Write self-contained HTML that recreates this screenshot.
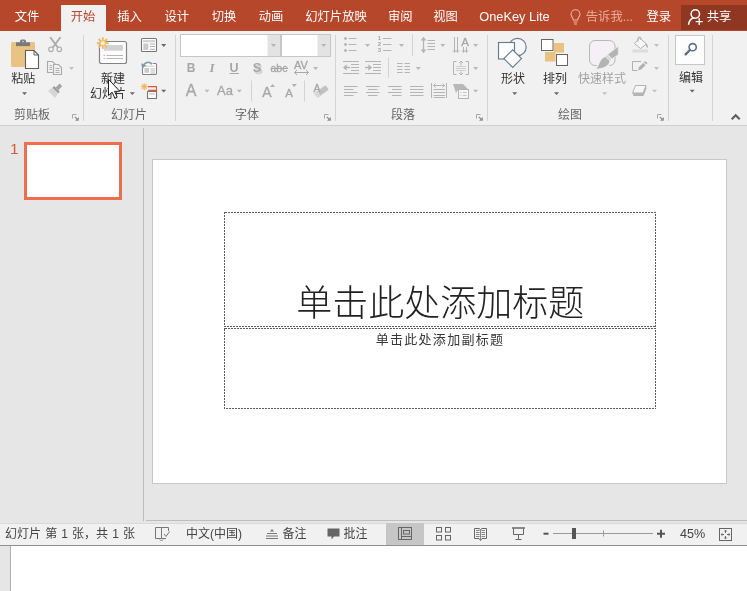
<!DOCTYPE html>
<html lang="zh-CN">
<head>
<meta charset="utf-8">
<title>PowerPoint</title>
<style>
*{box-sizing:border-box;margin:0;padding:0}
html,body{width:747px;height:591px;overflow:hidden;background:#fff}
body{font-family:"Liberation Sans","Noto Sans CJK SC",sans-serif;font-size:12px;color:#444;position:relative}
.abs{position:absolute}
#tabbar{left:0;top:0;width:747px;height:31px;background:#b7472a}
.tab{position:absolute;top:0;height:31px;line-height:35px;color:#fff;font-size:12.3px;transform:translateX(-50%);white-space:nowrap}
#tab-active{left:61px;top:5px;width:45px;height:26px;background:#f1f1f1}
#share{left:681px;top:5px;width:66px;height:25px;background:#903722}
#ribbon{left:0;top:31px;width:747px;height:95px;background:#f1f1f1;border-bottom:1px solid #d0d0d0}
.sep{position:absolute;top:35px;width:1px;height:86px;background:#d4d4d4}
.glabel{position:absolute;top:107px;font-size:12px;line-height:16px;color:#666;white-space:nowrap}
.ft{position:absolute;text-align:center;color:#a6a6a6;line-height:16px;font-family:"Liberation Sans",sans-serif;white-space:nowrap}
.fs{-webkit-text-stroke:0.3px #a6a6a6}
.btxt{position:absolute;font-size:12px;line-height:16px;color:#333;white-space:nowrap}
#main{left:0;top:126px;width:747px;height:397px;background:#e6e6e6}
#vdiv{left:143px;top:128px;width:1px;height:393px;background:#bcbcbc}
#thumb{left:24px;top:142px;width:98px;height:58px;background:#fff;border:3px solid #ee6d4d}
#thumbnum{left:10px;top:140px;font-size:15.5px;color:#d9583a;line-height:18px}
#slide{left:152px;top:159px;width:575px;height:325px;background:#fff;border:1px solid #c8c8c8}
#status{left:0;top:523px;width:747px;height:23px;background:#f1f1f1;border-top:1px solid #dadada;border-bottom:1px solid #909090}
#hline{left:146px;top:520px;width:601px;height:1px;background:#bebebe}
.st{position:absolute;top:526px;font-size:12px;line-height:16px;color:#444;white-space:nowrap}
#below{left:0;top:546px;width:747px;height:45px;background:#fff}
#belowleft{left:0;top:546px;width:11px;height:45px;background:#e6e6e6;border-right:1px solid #b0b0b0}
</style>
</head>
<body>
<div id="root" style="position:absolute;left:0;top:0;width:747px;height:591px;will-change:transform">
<div id="tabbar" class="abs"></div>
<div id="tab-active" class="abs"></div>
<div id="share" class="abs"></div>
<div class="tab" style="left:27px">文件</div>
<div class="tab" style="left:83px;color:#b7472a">开始</div>
<div class="tab" style="left:129.5px">插入</div>
<div class="tab" style="left:176.8px">设计</div>
<div class="tab" style="left:224px">切换</div>
<div class="tab" style="left:271px">动画</div>
<div class="tab" style="left:336px">幻灯片放映</div>
<div class="tab" style="left:400.2px">审阅</div>
<div class="tab" style="left:445.6px">视图</div>
<div class="tab" style="left:514.5px;font-size:12.8px;line-height:33px">OneKey Lite</div>
<div class="tab" style="left:609.4px;color:#e9ad9a">告诉我...</div>
<div class="tab" style="left:658.8px">登录</div>
<div class="tab" style="left:719px;line-height:35px">共享</div>

<svg class="abs" style="left:560px;top:0" width="187" height="31" viewBox="560 0 187 31">
<g fill="none" stroke="#e9b5a5" stroke-width="1.1">
<path d="M573.3,20 C573.3,17.500 571,16.800 571,14.300 a4.500,4.500 0 0 1 9,0 C580,16.800 577.700,17.500 577.700,20 Z"/>
<path d="M573.500,22 H577.500 M574,24 H577"/>
</g>
<g fill="none" stroke="#fff" stroke-width="1.500">
<circle cx="695.300" cy="14" r="4.200"/>
<path d="M688.600,24.800 C688.800,21 691,18.800 693.600,18"/>
<path d="M695.700,21.600 H702.700 M699.200,18.100 V25.100" stroke-width="1.300"/>
</g>
</svg>
<div id="ribbon" class="abs"></div>
<div class="sep" style="left:83px"></div>
<div class="sep" style="left:175px"></div>
<div class="sep" style="left:335px"></div>
<div class="sep" style="left:487px"></div>
<div class="sep" style="left:668px"></div>
<div class="sep" style="left:712px"></div>
<svg class="abs" id="ribsvg" style="left:0;top:0" width="747" height="130" viewBox="0 0 747 130">
<defs>
<path id="dd" d="M-2.5,-1.2 H2.5 L0,1.6 Z"/>
<g id="launch"><path d="M0.5,4.5 V0.5 H4.5" fill="none" stroke="#a8a8a8" stroke-width="1"/><path d="M2.8,2.8 L5.5,5.5" fill="none" stroke="#8c8c8c" stroke-width="1.1"/><path d="M6.8,3 V6.8 H3 Z" fill="#8c8c8c"/></g>
</defs>
<!-- ===== Clipboard group ===== -->
<rect x="11" y="42" width="24" height="25" rx="1.5" fill="#eac282"/>
<rect x="16" y="42.300" width="14" height="3.800" fill="#7a7a7a"/>
<path d="M20,42.800 V41.200 a1.800,1.800 0 0 1 1.800,-1.800 h2.400 a1.800,1.800 0 0 1 1.800,1.800 V42.800 Z" fill="#7a7a7a"/>
<rect x="22.200" y="40.800" width="1.600" height="1.400" fill="#c9c9c9"/>
<path d="M25.500,50.500 H34 L38.500,55 V68.500 H25.500 Z" fill="#fff" stroke="#5e5e5e" stroke-width="1.100" stroke-linejoin="miter"/>
<path d="M34,50.500 V55 H38.500" fill="none" stroke="#5e5e5e" stroke-width="1"/>
<use href="#dd" x="24.5" y="93.5" fill="#666"/>
<!-- scissors -->
<g fill="none" stroke="#ababab" stroke-linecap="round">
<path d="M50.600,37.800 L57.500,47 M60,37.800 L53.100,47" stroke-width="1.900"/>
<circle cx="51" cy="49.300" r="2.300" stroke-width="1.100"/><circle cx="59.300" cy="49.300" r="2.300" stroke-width="1.100"/>
</g>
<!-- copy -->
<g fill="#f1f1f1" stroke="#aaaaaa" stroke-width="1.100">
<path d="M47.500,61.500 H52.500 L55.500,64.500 V72.500 H47.500 Z"/>
<path d="M53.500,64.500 H58.500 L61.500,67.500 V74.500 H53.500 Z"/>
<path d="M49.500,65.500 H52 M49.500,67.500 H52 M49.500,69.500 H52 M55.500,68.500 H59.500 M55.500,70.500 H59.500 M55.500,72.500 H59.500" fill="none" stroke="#b0b0b0" stroke-width="1.200"/>
</g>
<use href="#dd" x="71.5" y="68.3" fill="#c0c0c0"/>
<!-- format painter -->
<path d="M52.470,87.670 L58.130,93.330 L54.940,97.940 L47.860,90.860 Z" fill="#d6d6d6"/>
<path d="M54.170,85.970 L59.830,91.630 L58.130,93.330 L52.470,87.670 Z" fill="#9c9c9c"/>
<path d="M59.560,83.560 L62.240,86.240 L58.340,90.140 L55.660,87.460 Z" fill="#a4a4a4"/>
<use href="#launch" x="72" y="114" />
<!-- ===== Slides group ===== -->
<rect x="99.500" y="41.500" width="27" height="22" rx="2" fill="#fdfdfd" stroke="#848484" stroke-width="1.200"/>
<rect x="104" y="45" width="19" height="5.700" fill="#d2d2d2"/>
<path d="M103.500,55.500 H105 M106.500,55.500 H123 M103.500,58.500 H105 M106.500,58.500 H123" stroke="#b8b8b8" stroke-width="1" fill="none"/>
<circle cx="102.800" cy="43.200" r="3.400" fill="#f1f1f1"/>
<g stroke="#f2bb62" stroke-width="1.900" stroke-linecap="butt">
<path d="M102.800,37.300 V49.100 M96.900,43.200 H108.700 M98.600,39 L107,47.400 M107,39 L98.600,47.400"/>
</g>
<circle cx="102.800" cy="43.200" r="2" fill="#f6f2ea"/>
<use href="#dd" x="132.300" y="93.500" fill="#666"/>
<!-- layout -->
<rect x="141.500" y="38.500" width="15" height="13" rx="1" fill="#fff" stroke="#777" stroke-width="1.100"/>
<rect x="143" y="40.200" width="12" height="2" fill="#cfcfcf"/>
<rect x="143.300" y="43.500" width="5" height="6.300" fill="#cacaca"/>
<path d="M150,44 H155 M150,46.500 H155 M150,49.300 H155" stroke="#b0b0b0" stroke-width="1"/>
<use href="#dd" x="163.700" y="45.300" fill="#666"/>
<!-- reset -->
<rect x="142.500" y="63.500" width="14" height="11" rx="1" fill="#fff" stroke="#848484" stroke-width="1.100"/>
<rect x="144.500" y="68" width="4.500" height="4.800" fill="#cacaca"/>
<rect x="145" y="65.500" width="9.500" height="1.500" fill="#dcdcdc"/>
<path d="M150.500,69 H155 M150.500,71 H155 M150.500,73 H155" stroke="#b8b8b8" stroke-width="1"/>
<path d="M143.200,66.200 C144.500,62.200 149.500,60.800 152,64.300" fill="none" stroke="#f1f1f1" stroke-width="3.400"/>
<path d="M143.200,66.200 C144.500,62.200 149.500,60.800 152,64.300" fill="none" stroke="#8497ae" stroke-width="1.500"/>
<path d="M141.300,63.600 L146.300,65.300 L142.300,68.800 Z" fill="#8497ae"/>
<!-- section -->
<g stroke="#f2bb62" stroke-width="1.200"><path d="M144.300,83.200 V90.200 M140.800,86.700 H147.800 M141.800,84.200 L146.800,89.200 M146.800,84.200 L141.800,89.200"/></g>
<path d="M148,86.600 H156.500 V90.400 H148" fill="none" stroke="#dc5a40" stroke-width="1.100"/>
<rect x="147.500" y="91.500" width="9" height="7" fill="#fff" stroke="#787878" stroke-width="1.100"/>
<rect x="149" y="93" width="6" height="1.600" fill="#d4d4d4"/>
<use href="#dd" x="163.700" y="91" fill="#666"/>
<!-- ===== Font group ===== -->
<rect x="180.5" y="34.5" width="100" height="22" fill="#fff" stroke="#c6c6c6"/>
<rect x="267.5" y="35" width="12.5" height="21" fill="#e3e3e3"/>
<rect x="281.5" y="34.5" width="49" height="22" fill="#fff" stroke="#c6c6c6"/>
<rect x="317.5" y="35" width="12.5" height="21" fill="#e3e3e3"/>
<use href="#dd" x="273.5" y="45.3" fill="#b4b4b4"/>
<use href="#dd" x="323.7" y="45.3" fill="#b4b4b4"/>
<use href="#dd" x="315.6" y="68.3" fill="#b8b8b8"/>
<use href="#dd" x="207" y="91" fill="#b8b8b8"/>
<use href="#dd" x="239.3" y="91" fill="#b8b8b8"/>
<path d="M251.5,80.5 V101.5 M304.5,80.5 V101.5" stroke="#d4d4d4" stroke-width="1"/>
<path d="M229.5,73.5 H239" stroke="#a8a8a8" stroke-width="1"/>
<path d="M270.5,68.5 H288" stroke="#a8a8a8" stroke-width="1"/>
<path d="M294.5,72.5 H308.5 M297,70 L294.5,72.5 L297,75 M306,70 L308.5,72.5 L306,75" fill="none" stroke="#a8a8a8" stroke-width="1"/>
<path d="M270,87 L272.5,84 L275,87 Z" fill="#b0b0b0"/>
<path d="M291.8,84 L294.3,87 L296.8,84 Z" fill="#b0b0b0"/>
<!-- clear formatting eraser -->
<g transform="translate(321.5,91.5) rotate(-36)">
<rect x="-7" y="-2.8" width="14" height="5.6" rx="1" fill="#c2c2c2"/>
<rect x="-7" y="-2.8" width="4" height="5.6" rx="1" fill="#d8d8d8"/>
</g>
<use href="#launch" x="324" y="114" />
<!-- ===== Paragraph group ===== -->
<g stroke="#b4b4b4" stroke-width="1" fill="none">
<path d="M348.5,38.5 H356.5 M348.5,44.5 H356.5 M348.5,50.5 H356.5"/>
<path d="M383,38.5 H391.5 M383,44.5 H391.5 M383,50.5 H391.5"/>
<!-- dec indent -->
<path d="M343,61.5 H359 M343,73.5 H359 M351,64.5 H359 M351,67.5 H359 M351,70.5 H359"/>
<path d="M344.500,67.500 H350" stroke-width="1.400"/><path d="M343,67.500 L346.700,64.300 V70.700 Z" fill="#b4b4b4" stroke="none"/>
<!-- inc indent -->
<path d="M365,61.5 H381 M365,73.5 H381 M373,64.5 H381 M373,67.5 H381 M373,70.5 H381"/>
<path d="M365,67.500 H370.500" stroke-width="1.400"/><path d="M372,67.500 L368.300,64.300 V70.700 Z" fill="#b4b4b4" stroke="none"/>
<!-- columns -->
<path d="M397,63.5 H402.5 M404.5,63.5 H410 M397,66.5 H402.5 M404.5,66.5 H410 M397,69.5 H402.5 M404.5,69.5 H410 M397,72.5 H402.5 M404.5,72.5 H410"/>
<!-- aligns -->
<path d="M344,86.5 H357.5 M344,89.5 H353.5 M344,92.5 H357.5 M344,95.5 H353.5"/>
<path d="M366,86.5 H379.5 M368,89.5 H377.5 M366,92.5 H379.5 M368,95.5 H377.5"/>
<path d="M388,86.5 H401.5 M392,89.5 H401.5 M388,92.5 H401.5 M392,95.5 H401.5"/>
<path d="M410,86.5 H423.5 M410,89.5 H423.5 M410,92.5 H423.5 M410,95.5 H423.5"/>
<!-- line spacing -->
<path d="M427.5,40.5 H435 M427.5,43.5 H435 M427.5,46.5 H435 M427.5,49.5 H435"/>
<path d="M423.500,38.500 V51.500" stroke-width="1.300"/><path d="M423.500,36.800 L426.300,40.500 H420.700 Z M423.500,53.200 L426.300,49.500 H420.700 Z" fill="#b4b4b4" stroke="none"/>
<!-- text direction -->
<path d="M454.5,37 V52 M457.5,37 V52 M463.5,47 V52 M466.5,47 V52"/>
<path d="M453,50.3 L454.5,52.5 L456,50.3 M456,50.3 L457.5,52.5 L459,50.3 M462,50.3 L463.5,52.5 L465,50.3 M465,50.3 L466.500,52.5 L468,50.3" stroke-width="0.9"/>
<!-- align text -->
<path d="M456.5,61.500 H453.500 V74.500 H456.500 M465.500,61.500 H468.500 V74.500 H465.500"/>
<path d="M456,66.500 H466 M456,68.500 H466 M456,70.500 H466" stroke="#cfcfcf"/>
<path d="M461,61 V65.500 M459,63 L461,61 L463,63 M461,71.500 V75 M459,73 L461,75 L463,73"/>
<!-- distribute -->
<path d="M431.500,83 V98 M446.500,83 V98 M433.500,89.500 H445 M433.500,92.500 H445 M433.500,95.500 H445 M433.500,97.500 H445"/>
<path d="M433.500,85.500 H444.500 M435.500,83.500 L433.500,85.500 L435.500,87.500 M442.500,83.500 L444.500,85.500 L442.500,87.500"/>
</g>
<g fill="#b4b4b4">
<circle cx="345.500" cy="38.500" r="1.400"/><circle cx="345.500" cy="44.500" r="1.400"/><circle cx="345.500" cy="50.500" r="1.400"/>
</g>
<path d="M412.500,34 V56 M388.500,57.500 V78" stroke="#d4d4d4" stroke-width="1"/>
<use href="#dd" x="367.5" y="45.3" fill="#b8b8b8"/>
<use href="#dd" x="401.5" y="45.3" fill="#b8b8b8"/>
<use href="#dd" x="418.3" y="68.3" fill="#b8b8b8"/>
<use href="#dd" x="442.8" y="45.3" fill="#b8b8b8"/>
<use href="#dd" x="475.7" y="45.3" fill="#b8b8b8"/>
<use href="#dd" x="475.7" y="68.3" fill="#b8b8b8"/>
<use href="#dd" x="475.7" y="91" fill="#b8b8b8"/>
<!-- smartart -->
<path d="M453,84 H463 L468,89 H458.500 L456,93 Z" fill="#b8b8b8"/>
<rect x="458.500" y="89.500" width="10" height="9" fill="#f4f4f4" stroke="#b4b4b4"/>
<path d="M460.500,92.500 H461.500 M463,92.500 H466.500 M460.500,95.500 H461.500 M463,95.500 H466.500" stroke="#c4c4c4"/>
<use href="#launch" x="476" y="114" />
<!-- ===== Drawing group ===== -->
<circle cx="517.500" cy="47" r="8.700" fill="#f6f6f6" stroke="#667a92" stroke-width="1.150"/>
<rect x="498.500" y="42.500" width="16" height="16.500" fill="#fdfdfd" stroke="#667a92" stroke-width="1.150"/>
<path d="M512.700,49.800 L521.500,58.600 L512.700,67.400 L503.900,58.600 Z" fill="#fff" stroke="#667a92" stroke-width="1.150"/>
<use href="#dd" x="514.7" y="93.5" fill="#666"/>
<path d="M554,43 H564 V52.500 H555.500 V61.500 H545 V52 H554 Z" fill="#eac282"/>
<rect x="541.500" y="39.500" width="11.500" height="11" fill="#fff" stroke="#666" stroke-width="1"/>
<rect x="556.500" y="54.500" width="11" height="11" fill="#fff" stroke="#666" stroke-width="1"/>
<use href="#dd" x="556.5" y="93.5" fill="#666"/>
<!-- quick styles -->
<rect x="589.500" y="40.500" width="25.500" height="25" rx="5.500" fill="#f4f0f5" stroke="#b8b8b8" stroke-width="1"/>
<path d="M606,55 L611,60 C610.500,65.500 603.500,68.800 595.800,69 C599.500,66.500 599,57 606,55 Z" fill="#f1f1f1" stroke="#f1f1f1" stroke-width="2.200"/>
<path d="M618.300,46.300 V54.700 L612,58.800 L607.700,54.500 Z" fill="#b4b4b4" stroke="#f1f1f1" stroke-width="0.600"/>
<path d="M607.200,55 L611.500,59.300 L609.800,61 L605.500,56.700 Z" fill="#d6d6d6"/>
<path d="M605.200,57 L609.500,61.300 C609,65.500 603,68.600 596.300,68.800 C599.800,66 599.500,58.800 605.200,57 Z" fill="#b4b4b4"/>
<use href="#dd" x="604.6" y="93.5" fill="#c0c0c0"/>
<!-- fill bucket -->
<rect x="632.500" y="49.500" width="15.500" height="3" fill="#dcdcdc"/>
<path d="M639.500,38 L646.500,44 L640.500,48.500 L634.500,43.500 Z" fill="#fafafa" stroke="#b0b0b0" stroke-width="1"/>
<path d="M638,42 V38.500 a1.500,1.500 0 0 1 3,0 V40" fill="none" stroke="#b0b0b0" stroke-width="1"/>
<path d="M645.500,43 C647.500,44 648.300,46 647.800,48 C646.500,47.500 645.500,45.500 645.500,43 Z" fill="#b0b0b0"/>
<use href="#dd" x="656.5" y="45.3" fill="#c0c0c0"/>
<!-- outline -->
<path d="M641,61.500 H632.500 V70.500 H637.500" fill="none" stroke="#b0b0b0" stroke-width="1"/>
<g transform="translate(642.5,66) rotate(-45)">
<path d="M-6,0 L-3.500,-1.600 H5.500 V1.600 H-3.500 Z" fill="#b0b0b0"/>
<rect x="2.800" y="-1.600" width="0.900" height="3.200" fill="#f1f1f1"/>
</g>
<use href="#dd" x="656.5" y="68.3" fill="#c0c0c0"/>
<!-- effects -->
<path d="M635.500,85.500 H646 L643,93 H632.500 Z" fill="#f6f6f6" stroke="#b4b4b4" stroke-width="1"/>
<path d="M632.500,93 H643 L646,85.500 L646.500,88.500 L643.500,96 H633.500 Z" fill="#b4b4b4"/>
<use href="#dd" x="654.5" y="91" fill="#c0c0c0"/>
<use href="#launch" x="657" y="114" />
<!-- ===== Editing group ===== -->
<rect x="675.500" y="35.500" width="29" height="29" fill="#fdfdfd" stroke="#c6c6c6"/>
<circle cx="692.700" cy="47.200" r="3.600" fill="none" stroke="#5a6e85" stroke-width="1.600"/>
<path d="M690,50 L685.600,54.400" stroke="#5a6e85" stroke-width="2.300" stroke-linecap="round"/>
<use href="#dd" x="692.2" y="91" fill="#666"/>
<path d="M731.700,119.300 L735.700,115.300 L739.700,119.300" fill="none" stroke="#5c5c5c" stroke-width="2.100"/>
</svg>

<div class="ft" style="left:186px;top:60px;width:10px;font-weight:bold;font-size:12px">B</div>
<div class="ft" style="left:207px;top:60px;width:10px;font-style:italic;font-family:'Liberation Serif',serif;font-size:13px;font-weight:bold">I</div>
<div class="ft" style="left:229px;top:60px;width:10px;font-size:12.5px;font-weight:bold">U</div>
<div class="ft" style="left:252px;top:60px;width:10px;font-size:13px;font-weight:bold;text-shadow:1.5px 1.5px 1px #ccc">S</div>
<div class="ft fs" style="left:269px;top:60px;width:20px;font-size:10.5px">abc</div>
<div class="ft fs" style="left:291px;top:57px;width:20px;font-size:11px">AV</div>
<div class="ft fs" style="left:184px;top:81px;width:14px;font-size:16px;line-height:20px">A</div>
<div class="ft fs" style="left:215px;top:82px;width:20px;font-size:13px;line-height:18px">Aa</div>
<div class="ft fs" style="left:260px;top:83px;width:14px;font-size:14px;line-height:18px">A</div>
<div class="ft fs" style="left:282px;top:84px;width:14px;font-size:11.5px;line-height:18px">A</div>
<div class="ft fs" style="left:312px;top:80px;width:10px;font-size:10.5px;line-height:16px">A</div>
<div class="ft fs" style="left:459px;top:34px;width:12px;font-size:11.5px;line-height:16px">A</div>
<div class="ft" style="left:376px;top:34px;width:7px;font-size:6px;line-height:9px;font-weight:bold">1</div>
<div class="ft" style="left:376px;top:40px;width:7px;font-size:6px;line-height:9px;font-weight:bold">2</div>
<div class="ft" style="left:376px;top:46px;width:7px;font-size:6px;line-height:9px;font-weight:bold">3</div>

<div class="glabel" style="left:14px">剪贴板</div>
<div class="glabel" style="left:111px">幻灯片</div>
<div class="glabel" style="left:235px">字体</div>
<div class="glabel" style="left:391px">段落</div>
<div class="glabel" style="left:558px">绘图</div>
<div class="btxt" style="left:11.2px;top:71px">粘贴</div>
<div class="btxt" style="left:101px;top:71px">新建</div>
<div class="btxt" style="left:90px;top:86px">幻灯片</div>
<div class="btxt" style="left:501px;top:71px">形状</div>
<div class="btxt" style="left:543px;top:71px">排列</div>
<div class="btxt" style="left:578px;top:71px;color:#a2a2a2">快速样式</div>
<div class="btxt" style="left:679px;top:70px">编辑</div>

<div id="main" class="abs"></div>
<svg class="abs" style="left:100px;top:74px;z-index:5" width="30" height="30" viewBox="100 74 30 30"><path d="M108.5,79.3 V95.5 L112.1,92.2 L114.9,98.2 L117.2,97.2 L114.5,91.3 H119.8 Z" fill="#fff" stroke="#222" stroke-width="1"/></svg>
<div id="vdiv" class="abs"></div>
<div id="hline" class="abs"></div>
<div id="thumb" class="abs"></div>
<div id="thumbnum" class="abs">1</div>
<div id="slide" class="abs"></div>
<svg class="abs" style="left:220px;top:208px" width="440" height="205" viewBox="220 208 440 205" shape-rendering="crispEdges">
<rect x="224.500" y="212.500" width="431" height="114" fill="none" stroke="#5a5a5a" stroke-width="1" stroke-dasharray="2 1"/>
<rect x="224.500" y="328.500" width="431" height="80" fill="none" stroke="#5a5a5a" stroke-width="1" stroke-dasharray="2 1"/>
</svg>
<div class="abs" id="title" style="left:224.3px;top:282px;width:432px;text-align:center;font-size:36px;line-height:44px;font-weight:300;color:#222;white-space:nowrap">单击此处添加标题</div>
<div class="abs" id="subtitle" style="left:224px;top:331px;width:432px;text-align:center;font-size:13px;line-height:18px;color:#222;white-space:nowrap;letter-spacing:1.3px;color:#383838">单击此处添加副标题</div>

<div id="status" class="abs"></div>
<div class="st" style="left:5px;word-spacing:0.8px">幻灯片 第 1 张，共 1 张</div>
<div class="st" style="left:186px">中文(中国)</div>
<div class="st" style="left:282.5px">备注</div>
<div class="st" style="left:343.5px">批注</div>
<div class="st" style="left:680px;font-size:12.6px">45%</div>
<svg class="abs" style="left:0;top:520px" width="747" height="28" viewBox="0 520 747 28">
<rect x="386" y="523" width="38" height="22" fill="#c6c6c6"/>
<!-- spell -->
<g fill="none" stroke="#777" stroke-width="1">
<path d="M155.500,527.500 H161.500 V538.500 H155.500 Z M161.500,527.500 H168.500 V531 M161.500,538.500 H166"/>
<path d="M164,534 L166,536.500 L169.500,531.500"/>
<path d="M160,539.500 L161.500,541 L163,539.500" />
</g>
<!-- notes -->
<g stroke="#777" stroke-width="1" fill="none">
<path d="M267,533.500 H277 M266,536 H278 M266,538.500 H278"/>
<path d="M270,531.500 L272,529 L274,531.500 Z" fill="#777" stroke="none"/>
</g>
<!-- comment -->
<path d="M327.500,528.500 H339.500 V536.500 H334 L331.500,539.500 V536.500 H327.500 Z" fill="#666"/>
<!-- normal view -->
<g fill="none" stroke="#666" stroke-width="1">
<rect x="398.500" y="527.500" width="13" height="12"/>
<path d="M401.500,527.500 V539.500 M401.500,536.500 H411.500"/>
<rect x="403.500" y="530.500" width="6" height="3.500"/>
<!-- sorter -->
<rect x="436.500" y="527.500" width="5" height="4.500"/><rect x="445.500" y="527.500" width="5" height="4.500"/>
<rect x="436.500" y="535.500" width="5" height="4.500"/><rect x="445.500" y="535.500" width="5" height="4.500"/>
<!-- reading -->
<path d="M474.500,528.500 H479 L480.500,529.500 L482,528.500 H486.500 V538.500 H482 L480.500,540.500 L479,538.500 H474.500 Z"/>
<path d="M480.500,529.500 V540 M476,530.500 H479.500 M476,532.500 H479.500 M476,534.500 H479.500 M476,536.500 H479.500 M481.500,530.500 H485 M481.500,532.500 H485 M481.500,534.500 H485 M481.500,536.500 H485" stroke-width="1" stroke="#888"/>
<!-- slideshow -->
<path d="M512,528 H525" stroke-width="1.500"/>
<path d="M513.500,528.500 V534.500 H523.500 V528.500 M518.500,534.500 V539.500 M515.500,539.500 H521.500"/>
</g>
<!-- zoom slider -->
<path d="M543.500,533.700 H548.500" stroke="#555" stroke-width="2"/>
<path d="M553,533.500 H653" stroke="#9a9a9a" stroke-width="1"/>
<path d="M603.500,530.500 V536.500" stroke="#9a9a9a" stroke-width="1"/>
<rect x="572" y="528" width="4" height="11" fill="#555"/>
<path d="M657,533.700 H665 M661,529.700 V537.700" stroke="#555" stroke-width="2"/>
<!-- fit -->
<g fill="none" stroke="#666" stroke-width="1">
<rect x="719.500" y="528.500" width="12" height="12"/>
<path d="M725.500,530 V533 M725.500,536 V539 M721,534.500 H724 M727,534.500 H730" />
<path d="M724.300,531.500 L725.500,530 L726.700,531.500 M724.300,537.500 L725.500,539 L726.700,537.500 M722.500,533.300 L721,534.500 L722.500,535.700 M728.500,533.300 L730,534.500 L728.500,535.700" stroke-width="0.800"/>
</g>
</svg>

<div id="below" class="abs"></div>
<div id="belowleft" class="abs"></div>
</div>
</body>
</html>
